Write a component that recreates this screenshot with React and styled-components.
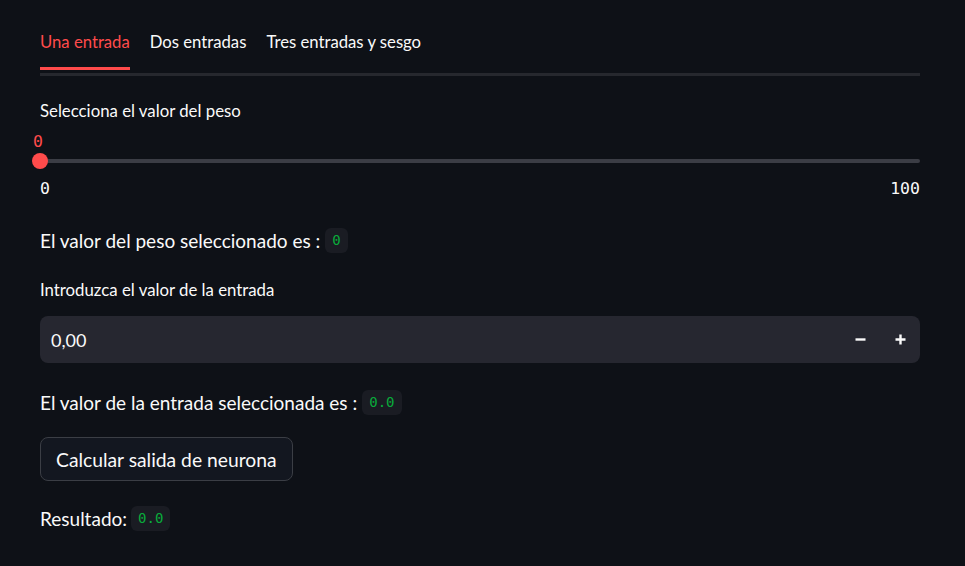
import React from 'react';
import styled, { createGlobalStyle } from 'styled-components';

const GlobalStyle = createGlobalStyle`
  html, body {
    margin: 0;
    padding: 0;
    background: #0e1117;
    color: #fafafa;
    font-family: Lato, "Noto Sans", sans-serif;
  }
`;

const Page = styled.main`
  width: 880px;
  padding: 30px 45px 30px 40px;
  display: flex;
  flex-direction: column;
`;

const TabList = styled.div`
  display: flex;
  gap: 20px;
`;

const Tab = styled.div`
  display: flex;
  flex-direction: column;
  font-size: 16.7px;
  line-height: 24px;
  color: ${p => (p.active ? '#ff4b4b' : '#fafafa')};

  &::after {
    content: '';
    height: 3px;
    margin-top: 13px;
    background: ${p => (p.active ? '#ff4b4b' : 'transparent')};
  }
`;

const TabBorder = styled.div`
  height: 3px;
  margin-top: 3px;
  background: #26282e;
`;

const Label = styled.div`
  font-size: 16.8px;
  line-height: 20px;
  margin-top: ${p => p.top}px;
`;

const Slider = styled.div`
  display: flex;
  flex-direction: column;
`;

const ThumbValue = styled.div`
  font-family: "DejaVu Sans Mono", monospace;
  font-size: 16.5px;
  line-height: 20px;
  color: #ff4b4b;
  margin-top: 11px;
  margin-left: -7px;
`;

const Track = styled.div`
  position: relative;
  height: 16px;
  margin-top: 1px;
  display: flex;
  align-items: center;

  &::before {
    content: '';
    flex: 1;
    height: 4px;
    border-radius: 2px;
    background: #3b3d45;
  }
`;

const Thumb = styled.div`
  position: absolute;
  left: -8px;
  top: 0;
  width: 16px;
  height: 16px;
  border-radius: 50%;
  background: #ff4b4b;
`;

const Ticks = styled.div`
  display: flex;
  justify-content: space-between;
  font-family: "DejaVu Sans Mono", monospace;
  font-size: 16.5px;
  line-height: 20px;
  margin-top: 10px;
`;

const Line = styled.div`
  display: flex;
  align-items: center;
  gap: ${p => p.gap || 5}px;
  height: 28px;
  font-size: 19px;
  margin-top: ${p => p.top}px;
`;

const Code = styled.code`
  font-family: "DejaVu Sans Mono", monospace;
  font-size: 14px;
  line-height: 25px;
  padding: 0 7px;
  border-radius: 6px;
  background: #1a1c23;
  color: #09ab3b;
`;

const NumberInput = styled.div`
  display: flex;
  align-items: center;
  height: 47px;
  margin-top: 16px;
  border-radius: 8px;
  background: #262730;
`;

const InputText = styled.div`
  flex: 1;
  padding-left: 11px;
  font-size: 18px;
`;

const StepButton = styled.button`
  width: 40px;
  height: 47px;
  display: flex;
  align-items: center;
  justify-content: center;
  border: none;
  padding: 0;
  background: transparent;
  color: #fafafa;
`;

const Button = styled.button`
  align-self: flex-start;
  height: 44px;
  margin-top: 21px;
  padding: 0 15px;
  border: 1px solid #3b3e45;
  border-radius: 8px;
  background: #131720;
  color: #fafafa;
  font-family: Lato, "Noto Sans", sans-serif;
  font-size: 19.3px;
`;

const Minus = () => (
  <svg width="11" height="11" viewBox="0 0 11 11">
    <path d="M0.5 5.5H10.5" stroke="currentColor" strokeWidth="2.4" />
  </svg>
);

const Plus = () => (
  <svg width="11" height="11" viewBox="0 0 11 11">
    <path d="M0.5 5.5H10.5M5.5 0.5V10.5" stroke="currentColor" strokeWidth="2.4" />
  </svg>
);

export default function App() {
  return (
    <>
      <GlobalStyle />
      <Page>
        <TabList>
          <Tab active>Una entrada</Tab>
          <Tab>Dos entradas</Tab>
          <Tab>Tres entradas y sesgo</Tab>
        </TabList>
        <TabBorder />

        <Label top={25}>Selecciona el valor del peso</Label>
        <Slider>
          <ThumbValue>0</ThumbValue>
          <Track>
            <Thumb />
          </Track>
          <Ticks>
            <span>0</span>
            <span>100</span>
          </Ticks>
        </Slider>

        <Line top={27}>
          El valor del peso seleccionado es : <Code>0</Code>
        </Line>

        <Label top={26}>Introduzca el valor de la entrada</Label>
        <NumberInput>
          <InputText>0,00</InputText>
          <StepButton aria-label="Restar"><Minus /></StepButton>
          <StepButton aria-label="Sumar"><Plus /></StepButton>
        </NumberInput>

        <Line top={25}>
          El valor de la entrada seleccionada es : <Code>0.0</Code>
        </Line>

        <Button>Calcular salida de neurona</Button>

        <Line top={23} gap={4}>
          Resultado: <Code>0.0</Code>
        </Line>
      </Page>
    </>
  );
}
